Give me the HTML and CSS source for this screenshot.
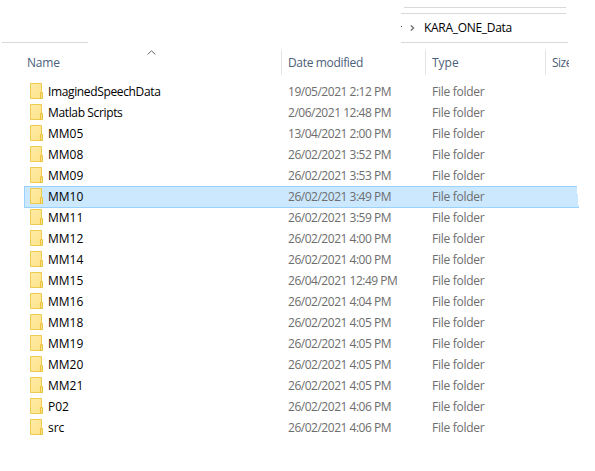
FILE: index.html
```
<!DOCTYPE html>
<html lang="en">
<head>
<meta charset="utf-8">
<title>KARA_ONE_Data</title>
<link rel="stylesheet" href="styles.css">
</head>
<body>
<svg class="defs" width="0" height="0" aria-hidden="true">
  <defs>
    <linearGradient id="paper" x1="0" y1="0" x2="1" y2="1"><stop offset="0" stop-color="#ffeba8"/><stop offset="1" stop-color="#fde388"/></linearGradient>
    <symbol id="folder" viewBox="0 0 13 16">
      <path d="M.5.5h11v15H.5z" fill="url(#paper)" stroke="#eccb50"/>
      <path d="M10.5 9.5h2v6h-2z" fill="#fbe18a" stroke="#e9c340"/>
    </symbol>
  </defs>
</svg>
<header class="top">
  <div class="stub"></div>
  <div class="address">
    <div class="strip"></div>
    <div class="crumbs"><i class="dot"></i><svg class="chevron" width="5" height="6" viewBox="0 0 5 6"><path d="M.8.4 3.6 3 .8 5.6" fill="none" stroke="#777" stroke-width="1.4"/></svg><span class="crumb">KARA_ONE_Data</span></div>
  </div>
</header>
<main>
  <div class="head">
    <div class="col name">Name<svg class="sort" width="9" height="5" viewBox="0 0 9 5"><path d="M.6 4.5 4.5.8 8.4 4.5" fill="none" stroke="#666"/></svg></div>
    <div class="col date"><span>Date modified</span></div>
    <div class="col type"><span>Type</span></div>
    <div class="col size"><span>Size</span></div>
  </div>
  <div class="list" id="list"></div>
</main>
<script src="files.js"></script>
</body>
</html>
```
FILE: styles.css
```
* { box-sizing: border-box; }
body {
  margin: 0;
  width: 595px;
  height: 471px;
  overflow: hidden;
  background: #fff;
  color: #000;
  font: 12px/20px "Open Sans", "Noto Sans", sans-serif;
  white-space: nowrap;
}
.defs { position: absolute; }
.top {
  display: flex;
  justify-content: space-between;
  align-items: flex-end;
  height: 43px;
  padding: 0 27px 0 2px;
}
.stub { width: 86px; border-bottom: 1px solid #d9d9d9; }
.address { width: 167px; height: 36px; border-bottom: 1px solid #d9d9d9; }
.strip {
  width: 162px;
  height: 6px;
  margin-left: 3px;
  border-top: 1px solid #d9d9d9;
}
.crumbs {
  display: flex;
  align-items: center;
  width: 165px;
  height: 29px;
  border-top: 1px solid #d9d9d9;
}
.dot { width: 1px; height: 1px; margin-top: -3px; background: #555; }
.chevron { margin-left: 8px; }
.crumb { margin-left: 9px; letter-spacing: -0.3px; }
.head {
  display: grid;
  grid-template-columns: 254px 144px 120px 24px;
  height: 38px;
  padding: 7px 0 6px 27px;
  color: #4c607a;
  line-height: 26px;
}
.col { height: 25px; }
.col + .col { padding-left: 6px; border-left: 1px solid #e5e5e5; }
.name { display: flex; letter-spacing: -0.2px; }
.sort { margin-left: 87px; }
.size { overflow: hidden; letter-spacing: -0.5px; }
.row {
  display: grid;
  grid-template-columns: 23px 240px 144px 1fr;
  width: 555px;
  height: 22px;
  margin: 0 0 -1px 24px;
  padding: 1px;
  color: #6d6d6d;
}
.row svg { margin: 1px 0 0 5px; }
.row .file { color: #000; }
.row .long { letter-spacing: -0.36px; }
.selected {
  background: #cce8ff;
  border: solid #99d1ff;
  border-width: 1px 0 1px 1px;
  padding: 0;
  clip-path: polygon(0 0, 553px 0, 553px 8px, 554px 8px, 554px 19px, 555px 19px, 555px 22px, 0 22px);
}
.date span { letter-spacing: -0.34px; }
.when { letter-spacing: -0.48px; }
.kind { letter-spacing: -0.28px; }
```
FILE: files.js
```
const files = [
  ["ImaginedSpeechData", "19/05/2021 2:12 PM"],
  ["Matlab Scripts", "2/06/2021 12:48 PM"],
  ["MM05", "13/04/2021 2:00 PM"],
  ["MM08", "26/02/2021 3:52 PM"],
  ["MM09", "26/02/2021 3:53 PM"],
  ["MM10", "26/02/2021 3:49 PM"],
  ["MM11", "26/02/2021 3:59 PM"],
  ["MM12", "26/02/2021 4:00 PM"],
  ["MM14", "26/02/2021 4:00 PM"],
  ["MM15", "26/04/2021 12:49 PM"],
  ["MM16", "26/02/2021 4:04 PM"],
  ["MM18", "26/02/2021 4:05 PM"],
  ["MM19", "26/02/2021 4:05 PM"],
  ["MM20", "26/02/2021 4:05 PM"],
  ["MM21", "26/02/2021 4:05 PM"],
  ["P02", "26/02/2021 4:06 PM"],
  ["src", "26/02/2021 4:06 PM"]
];
document.getElementById("list").innerHTML = files.map(([name, when]) => `
  <div class="row${name === "MM10" ? " selected" : ""}">
    <svg width="13" height="16"><use href="#folder"/></svg>
    <span class="file${name.length > 4 ? " long" : ""}">${name}</span><span class="when">${when}</span><span class="kind">File folder</span>
  </div>`).join("");
```
